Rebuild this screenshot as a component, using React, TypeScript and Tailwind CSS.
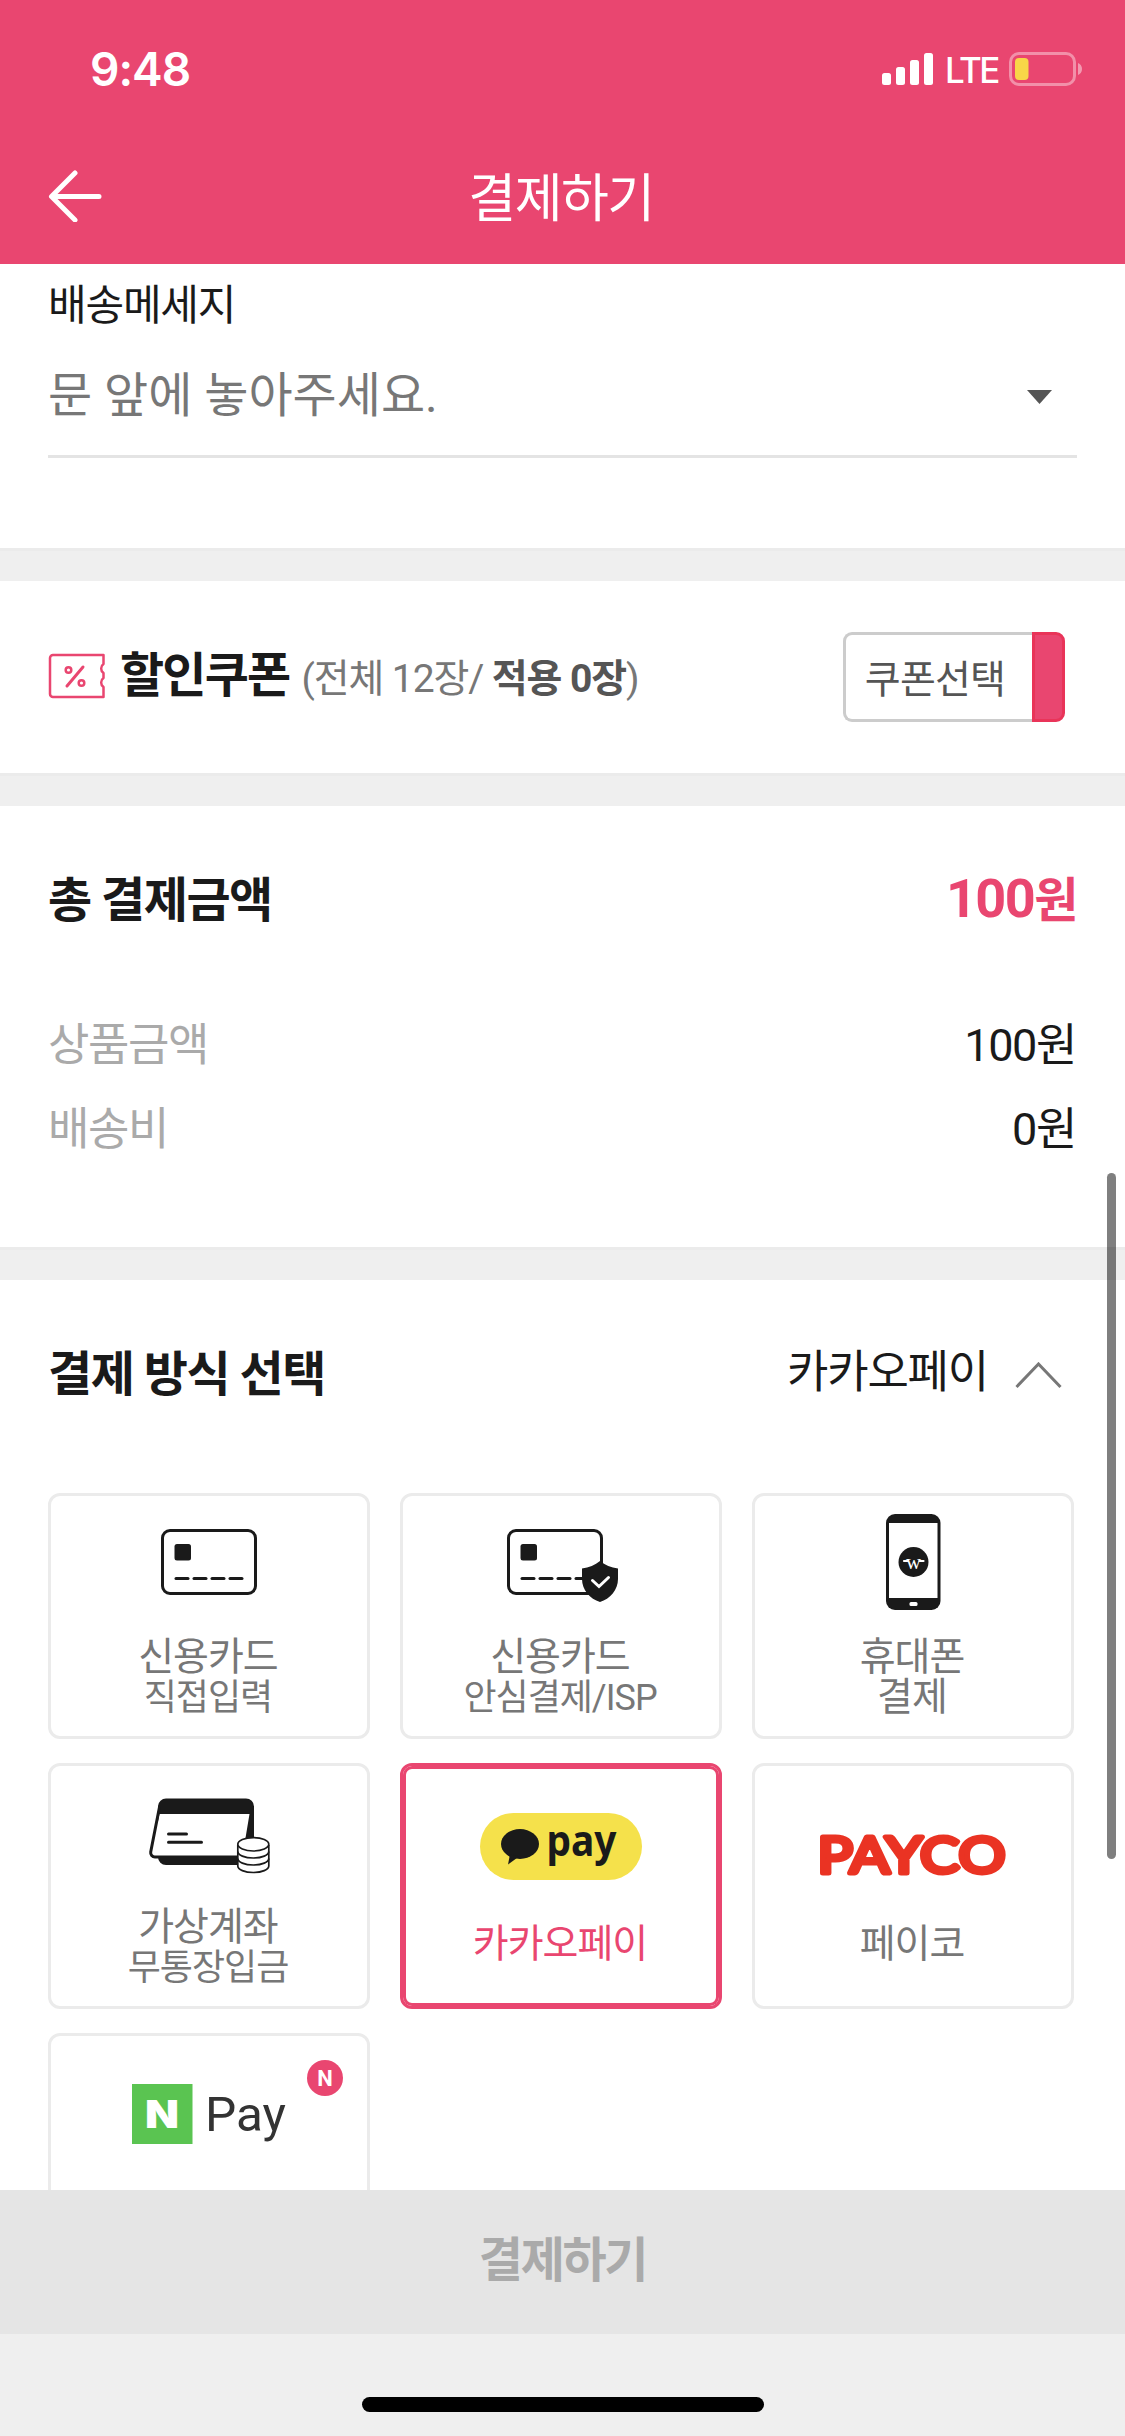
import type { ReactNode } from 'react'

const FONT = "font-['Roboto','Noto_Sans_CJK_KR',sans-serif]"

function Art({ children }: { children: ReactNode }) {
  return (
    <svg width="316" height="142" viewBox="0 0 316 142" fill="none" className="block shrink-0">
      {children}
    </svg>
  )
}

function CardOutline({ x }: { x: number }) {
  return (
    <g transform={`translate(${x} 33)`}>
      <rect x="1.5" y="1.5" width="93" height="63" rx="7.5" stroke="#1a1a1a" strokeWidth="3" />
      <rect x="13.5" y="15" width="16.5" height="16.5" rx="2.5" fill="#1a1a1a" />
      {[13.5, 31.5, 49.5, 67.5].map((left) => (
        <rect key={left} x={left} y="48" width="15" height="3" rx="1.5" fill="#1a1a1a" />
      ))}
    </g>
  )
}

function CreditCardArt() {
  return (
    <Art>
      <CardOutline x={110} />
    </Art>
  )
}

function SafeCardArt() {
  return (
    <Art>
      <CardOutline x={104} />
      <path
        d="M197 65c5 4 11 6.500 18 7.500v10.500c0 11-8 20-18 23-10-3-18-12-18-23v-10.500c7-1 13-3.500 18-7.500z"
        fill="#1a1a1a"
      />
      <path d="M189.500 84.500l6.500 6 9.500-9" stroke="#fff" strokeWidth="3" strokeLinecap="round" />
    </Art>
  )
}

function PhoneArt() {
  return (
    <Art>
      <rect x="131" y="18" width="54.500" height="96" rx="9" fill="#1a1a1a" />
      <rect x="134" y="27" width="48.500" height="75" fill="#fff" />
      <circle cx="158.500" cy="66" r="15" fill="#1a1a1a" />
      <text
        x="151"
        y="73"
        textLength="15"
        lengthAdjust="spacingAndGlyphs"
        className="font-['Liberation_Serif',serif] text-[21px]"
        fill="#fff"
      >
        w
      </text>
      <path d="M149 65h4M164.500 65h4" stroke="#fff" strokeWidth="2.200" strokeLinecap="round" />
      <rect x="154.500" y="106" width="8" height="4" rx="1.500" fill="#fff" />
    </Art>
  )
}

function BankArt() {
  return (
    <Art>
      <path d="M107 40a8 8 0 0 1 8-7.500h80a8 8 0 0 1 8 8v58.500h-88a8 8 0 0 1-8-8z" fill="#1a1a1a" />
      <path d="M108.500 48l-8 38.500a4 4 0 0 0 4 4.500h82.500a5 5 0 0 0 5-4l6.500-39z" fill="#fff" />
      <path d="M108.500 41L99.700 86a4.300 4.300 0 0 0 4.300 5h86" stroke="#1a1a1a" strokeWidth="3" />
      <path d="M117.500 68h18M117.500 76.200h33" stroke="#1a1a1a" strokeWidth="3" strokeLinecap="round" />
      <path
        d="M186.800 79v21c0 3.600 7 6.500 15.500 6.500s15.500-2.900 15.500-6.500v-21"
        fill="#fff"
        stroke="#1a1a1a"
        strokeWidth="1.700"
      />
      <path
        d="M186.800 85.500c0 3.600 7 6.500 15.500 6.500s15.500-2.900 15.500-6.500M186.800 92.500c0 3.600 7 6.500 15.500 6.500s15.500-2.900 15.500-6.500"
        stroke="#1a1a1a"
        strokeWidth="1.700"
      />
      <ellipse cx="202.300" cy="78.300" rx="15.500" ry="6.700" fill="#fff" stroke="#1a1a1a" strokeWidth="1.700" />
    </Art>
  )
}

function KakaoPayArt() {
  return (
    <Art>
      <rect x="77" y="47" width="162" height="67" rx="33.500" fill="#f5e14b" />
      <ellipse cx="117" cy="78" rx="19" ry="15" fill="#1a1a1a" />
      <path d="M107 88l-2 10.500 11-8z" fill="#1a1a1a" />
      <text
        x="143.500"
        y="90"
        textLength="70"
        lengthAdjust="spacingAndGlyphs"
        className="font-['Noto_Sans',sans-serif] text-[43px] font-bold"
        fill="#1a1a1a"
      >
        pay
      </text>
    </Art>
  )
}

function PaycoArt() {
  return (
    <Art>
      <text
        x="62.500"
        y="107"
        textLength="188"
        lengthAdjust="spacingAndGlyphs"
        className="font-['Lato',sans-serif] text-[51px]"
        fill="#ea3323"
        stroke="#ea3323"
        strokeWidth="5"
        strokeLinejoin="round"
      >
        PAYCO
      </text>
    </Art>
  )
}

function NaverPayArt() {
  return (
    <Art>
      <rect x="81" y="48" width="60.500" height="60" fill="#5ac451" />
      <text
        x="94"
        y="92"
        textLength="34"
        lengthAdjust="spacingAndGlyphs"
        className="font-['Inter',sans-serif] text-[39px] font-black"
        fill="#fff"
      >
        N
      </text>
      <text
        x="154"
        y="95"
        textLength="81"
        lengthAdjust="spacingAndGlyphs"
        className="font-['Roboto',sans-serif] text-[49px]"
        fill="#333"
      >
        Pay
      </text>
    </Art>
  )
}

type Method = {
  id: string
  art: ReactNode
  lines: string[]
  smallSecond?: boolean
  selected?: boolean
  isNew?: boolean
}

const METHODS: Method[] = [
  { id: 'card', art: <CreditCardArt />, lines: ['신용카드', '직접입력'], smallSecond: true },
  { id: 'isp', art: <SafeCardArt />, lines: ['신용카드', '안심결제/ISP'], smallSecond: true },
  { id: 'phone', art: <PhoneArt />, lines: ['휴대폰', '결제'] },
  { id: 'bank', art: <BankArt />, lines: ['가상계좌', '무통장입금'], smallSecond: true },
  { id: 'kakao', art: <KakaoPayArt />, lines: ['카카오페이'], selected: true },
  { id: 'payco', art: <PaycoArt />, lines: ['페이코'] },
  { id: 'naver', art: <NaverPayArt />, lines: [], isNew: true },
]

function MethodCard({ method }: { method: Method }) {
  const tone = method.selected
    ? 'border-[#e94670] text-[#e94670] shadow-[inset_0_0_0_3px_#e94670]'
    : 'border-[#ebebeb] text-[#777]'
  return (
    <button
      type="button"
      className={`relative flex h-[246px] w-[322px] flex-col items-center rounded-[12px] border-[3px] ${tone}`}
    >
      {method.art}
      <span
        className={`flex flex-col items-center pr-[2px] text-[39px] leading-[39px] tracking-[-1px] ${method.lines.length === 1 ? 'mt-[17px]' : ''}`}
      >
        <span>{method.lines[0]}</span>
        {method.lines[1] && (
          <span className={method.smallSecond ? 'text-[36px] leading-[43px]' : 'leading-[40px]'}>{method.lines[1]}</span>
        )}
      </span>
      {method.isNew && (
        <span className="absolute top-[24px] right-[24px] flex size-9 items-center justify-center rounded-full bg-[#e94670] text-[22px] font-bold tracking-normal text-white">
          N
        </span>
      )}
    </button>
  )
}

function Band() {
  return <div className="h-[33px] shrink-0 border-t-[3px] border-[#ebebeb] bg-[#efefef]" />
}

function StatusBar() {
  return (
    <div className="flex h-[138px] items-center justify-between pr-[43px] pl-[90px] text-white">
      <span className="font-['Inter',sans-serif] text-[46px] font-semibold tracking-[-1px]">9:48</span>
      <div className="flex items-center">
        <svg width="52" height="34" viewBox="0 0 52 34" fill="#fff">
          <rect x="0" y="21" width="9" height="12" rx="2.500" />
          <rect x="14" y="15" width="9" height="18" rx="2.500" />
          <rect x="28" y="8" width="9" height="25" rx="2.500" />
          <rect x="42" y="1" width="9" height="32" rx="2.500" />
        </svg>
        <span className="mt-[2px] ml-[11px] w-[52px] font-['Inter',sans-serif] text-[35px] font-medium tracking-[-2.500px]">
          LTE
        </span>
        <svg width="73" height="34" viewBox="0 0 73 34" className="ml-[12px]">
          <rect x="1.500" y="1.500" width="64" height="31" rx="8.500" fill="none" stroke="#fff" strokeOpacity=".4" strokeWidth="3" />
          <rect x="6" y="6" width="13.500" height="22" rx="4" fill="#f8d648" />
          <path d="M69 11c2.500 1 4 3.300 4 6s-1.500 5-4 6z" fill="#fff" fillOpacity=".45" />
        </svg>
      </div>
    </div>
  )
}

function PriceRow({ label, value }: { label: string; value: string }) {
  return (
    <div className="flex h-[84px] items-center justify-between text-[45px] tracking-[-1.4px]">
      <span className="text-[#aaa]">{label}</span>
      <span className="pr-px text-[#1a1a1a]">{value}</span>
    </div>
  )
}

export default function App() {
  return (
    <div className={`relative flex h-[2436px] w-[1125px] flex-col overflow-hidden bg-white text-[#1a1a1a] ${FONT}`}>
      <header className="h-[264px] shrink-0 bg-[#e94670] text-white">
        <StatusBar />
        <div className="relative flex h-[124px] items-center justify-center pr-[3px]">
          <svg width="54" height="52" viewBox="0 0 54 52" fill="none" className="absolute top-[32px] left-[48px]">
            <path d="M27 3L3.500 26.500 27 50M4 26.500h47" stroke="#fff" strokeWidth="5" strokeLinecap="round" strokeLinejoin="round" />
          </svg>
          <h1 className="text-[52px] font-normal tracking-[-1.500px]">결제하기</h1>
        </div>
      </header>

      <main className="h-[1926px] shrink-0 overflow-hidden">
        <section className="h-[284px] px-12 pt-[12px]">
          <p className="text-[42px] leading-[60px] tracking-[-1.200px]">배송메세지</p>
          <div className="flex h-[122px] items-center justify-between border-b-[3px] border-[#e4e4e4] pr-[25px]">
            <span className="text-[48px] text-[#777]">문 앞에 놓아주세요.</span>
            <svg width="25" height="14" viewBox="0 0 25 14" fill="#555" className="mt-[3px]">
              <path d="M0 0h25L12.500 14z" />
            </svg>
          </div>
        </section>
        <Band />

        <section className="flex h-[192px] items-center justify-between pr-[60px] pl-12">
          <div className="flex items-center pb-[3px]">
            <svg width="58" height="46" viewBox="0 0 58 46" fill="none" stroke="#e94670">
              <path
                d="M5 2h50.500v9a5.500 5.500 0 0 0 0 9v5a5.500 5.500 0 0 0 0 9v10H5a3 3 0 0 1-3-3V5a3 3 0 0 1 3-3z"
                strokeWidth="2.500"
                strokeLinejoin="round"
              />
              <path d="M35 14L19 33" strokeWidth="3" strokeLinecap="round" />
              <circle cx="20.500" cy="17" r="2.800" strokeWidth="2.500" />
              <circle cx="33.500" cy="30" r="2.800" strokeWidth="2.500" />
            </svg>
            <h2 className="ml-[14px] text-[48px] font-bold tracking-[-1.800px]">할인쿠폰</h2>
            <span className="mt-[7px] ml-[12px] text-[39px] tracking-[-1.100px] text-[#777]">
              (전체 12장/ <b className="font-bold text-[#555]">적용 0장</b>)
            </span>
          </div>
          <button type="button" className="flex h-[90px] w-[222px] text-[39px] tracking-[-0.800px] text-[#555]">
            <span className="flex h-full flex-1 items-center justify-center rounded-l-[9px] border-[3px] border-r-0 border-[#ccc] pt-[7px] pr-[8px]">
              쿠폰선택
            </span>
            <span className="h-full w-[33px] rounded-r-[9px] border-[3px] border-[#e93459] bg-[#e94670]" />
          </button>
        </section>
        <Band />

        <section className="h-[441px] px-12 pt-[50px]">
          <div className="flex h-[90px] items-center justify-between font-bold tracking-[-1.500px]">
            <h2 className="text-[48px]">총 결제금액</h2>
            <p className="pb-[5px] text-[48px] text-[#e94670]">
              <span className="text-[54px]">100</span>원
            </p>
          </div>
          <div className="mt-[58px]">
            <PriceRow label="상품금액" value="100원" />
            <PriceRow label="배송비" value="0원" />
          </div>
        </section>
        <Band />

        <section className="px-12 pt-[50px]">
          <div className="flex h-[90px] items-center justify-between pr-[15px]">
            <h2 className="text-[48px] font-bold tracking-[-1.500px]">결제 방식 선택</h2>
            <div className="flex items-center">
              <span className="pb-[4px] text-[45px] tracking-[-1.200px]">카카오페이</span>
              <svg width="47" height="27" viewBox="0 0 47 27" fill="none" className="ml-[27px]">
                <path d="M1.500 25L23.500 2l22 23" stroke="#777" strokeWidth="3" />
              </svg>
            </div>
          </div>
          <div className="mt-[73px] grid grid-cols-[322px_322px_322px] gap-x-[30px] gap-y-6">
            {METHODS.map((method) => (
              <MethodCard key={method.id} method={method} />
            ))}
          </div>
        </section>
      </main>

      <footer className="flex-1 bg-[#efefef]">
        <button type="button" className="flex h-[144px] w-full items-center justify-center bg-[#e5e5e5] pb-[3px] text-[48px] font-bold tracking-[-2.300px] text-[#aaa]">
          결제하기
        </button>
        <div className="mx-auto mt-[63px] h-[15px] w-[402px] rounded-full bg-black" />
      </footer>

      {/* scroll indicator */}
      <div className="absolute top-[1173px] right-[9px] h-[686px] w-[9px] rounded-full bg-black/50" />
    </div>
  )
}
